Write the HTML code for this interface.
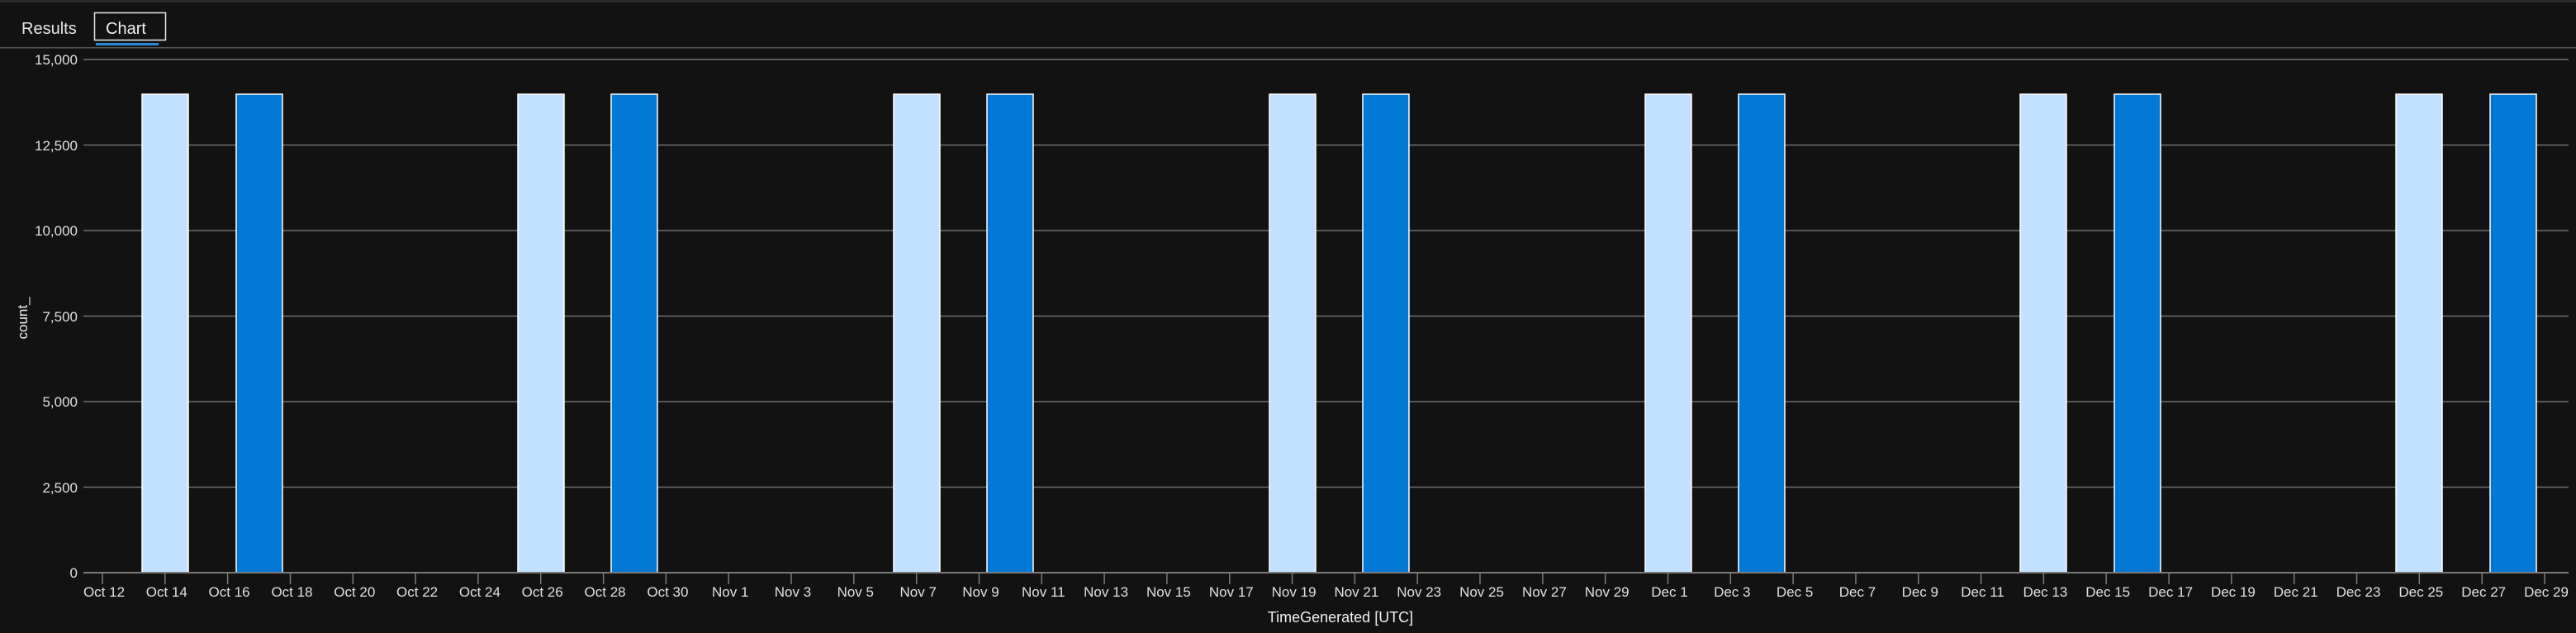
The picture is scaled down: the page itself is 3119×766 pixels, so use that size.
<!DOCTYPE html>
<html><head><meta charset="utf-8"><style>
html,body{margin:0;padding:0;background:#121212;width:3119px;height:766px;overflow:hidden;font-family:"Liberation Sans",sans-serif;}
</style></head><body>
<svg width="3119" height="766" xmlns="http://www.w3.org/2000/svg" style="position:absolute;left:0;top:0">
<rect x="0" y="0" width="3119" height="766" fill="#121212"/>
<rect x="0" y="0" width="3119" height="3" fill="#2a2a2a"/>
<text x="26" y="41" fill="#e6e6e6" font-size="20">Results</text>
<rect x="114.5" y="15.5" width="86" height="33" fill="none" stroke="#e6e6e6" stroke-width="1.5"/>
<text x="128" y="41" fill="#f0f0f0" font-size="20">Chart</text>
<rect x="116" y="52" width="76" height="3" fill="#2b88d8"/>
<rect x="0" y="57" width="3119" height="1.5" fill="#555"/>
<g stroke="#6e6e6e" stroke-width="1.5">
<line x1="101" y1="72" x2="3110" y2="72"/>
<line x1="101" y1="175.5" x2="3110" y2="175.5"/>
<line x1="101" y1="279" x2="3110" y2="279"/>
<line x1="101" y1="382.5" x2="3110" y2="382.5"/>
<line x1="101" y1="486" x2="3110" y2="486"/>
<line x1="101" y1="589.5" x2="3110" y2="589.5"/>
</g>
<g fill="#e0e0e0" font-size="17" text-anchor="end">
<text x="94" y="78">15,000</text>
<text x="94" y="182">12,500</text>
<text x="94" y="285">10,000</text>
<text x="94" y="389">7,500</text>
<text x="94" y="492">5,000</text>
<text x="94" y="596">2,500</text>
<text x="94" y="699">0</text>
</g>
<text transform="translate(33,385) rotate(-90)" fill="#f0f0f0" font-size="17" text-anchor="middle">count_</text>
<g stroke="#ffffff" stroke-width="1.5">
<rect x="172" y="114" width="56" height="579" fill="#c2e0ff"/>
<rect x="286" y="114" width="56" height="579" fill="#0078d4"/>
<rect x="627" y="114" width="56" height="579" fill="#c2e0ff"/>
<rect x="740" y="114" width="56" height="579" fill="#0078d4"/>
<rect x="1082" y="114" width="56" height="579" fill="#c2e0ff"/>
<rect x="1195" y="114" width="56" height="579" fill="#0078d4"/>
<rect x="1537" y="114" width="56" height="579" fill="#c2e0ff"/>
<rect x="1650" y="114" width="56" height="579" fill="#0078d4"/>
<rect x="1992" y="114" width="56" height="579" fill="#c2e0ff"/>
<rect x="2105" y="114" width="56" height="579" fill="#0078d4"/>
<rect x="2446" y="114" width="56" height="579" fill="#c2e0ff"/>
<rect x="2560" y="114" width="56" height="579" fill="#0078d4"/>
<rect x="2901" y="114" width="56" height="579" fill="#c2e0ff"/>
<rect x="3015" y="114" width="56" height="579" fill="#0078d4"/>
</g>
<line x1="101" y1="693" x2="3110" y2="693" stroke="#7a7a7a" stroke-width="2"/>
<g stroke="#7a7a7a" stroke-width="1.5">
<line x1="124" y1="693" x2="124" y2="707"/><line x1="199.8" y1="693" x2="199.8" y2="707"/><line x1="275.6" y1="693" x2="275.6" y2="707"/><line x1="351.5" y1="693" x2="351.5" y2="707"/><line x1="427.3" y1="693" x2="427.3" y2="707"/><line x1="503.1" y1="693" x2="503.1" y2="707"/><line x1="578.9" y1="693" x2="578.9" y2="707"/><line x1="654.7" y1="693" x2="654.7" y2="707"/><line x1="730.6" y1="693" x2="730.6" y2="707"/><line x1="806.4" y1="693" x2="806.4" y2="707"/><line x1="882.2" y1="693" x2="882.2" y2="707"/><line x1="958" y1="693" x2="958" y2="707"/><line x1="1033.8" y1="693" x2="1033.8" y2="707"/><line x1="1109.7" y1="693" x2="1109.7" y2="707"/><line x1="1185.5" y1="693" x2="1185.5" y2="707"/><line x1="1261.3" y1="693" x2="1261.3" y2="707"/><line x1="1337.1" y1="693" x2="1337.1" y2="707"/><line x1="1412.9" y1="693" x2="1412.9" y2="707"/><line x1="1488.8" y1="693" x2="1488.8" y2="707"/><line x1="1564.6" y1="693" x2="1564.6" y2="707"/><line x1="1640.4" y1="693" x2="1640.4" y2="707"/><line x1="1716.2" y1="693" x2="1716.2" y2="707"/><line x1="1792" y1="693" x2="1792" y2="707"/><line x1="1867.9" y1="693" x2="1867.9" y2="707"/><line x1="1943.7" y1="693" x2="1943.7" y2="707"/><line x1="2019.5" y1="693" x2="2019.5" y2="707"/><line x1="2095.3" y1="693" x2="2095.3" y2="707"/><line x1="2171.1" y1="693" x2="2171.1" y2="707"/><line x1="2247" y1="693" x2="2247" y2="707"/><line x1="2322.8" y1="693" x2="2322.8" y2="707"/><line x1="2398.6" y1="693" x2="2398.6" y2="707"/><line x1="2474.4" y1="693" x2="2474.4" y2="707"/><line x1="2550.2" y1="693" x2="2550.2" y2="707"/><line x1="2626.1" y1="693" x2="2626.1" y2="707"/><line x1="2701.9" y1="693" x2="2701.9" y2="707"/><line x1="2777.7" y1="693" x2="2777.7" y2="707"/><line x1="2853.5" y1="693" x2="2853.5" y2="707"/><line x1="2929.3" y1="693" x2="2929.3" y2="707"/><line x1="3005.2" y1="693" x2="3005.2" y2="707"/><line x1="3081" y1="693" x2="3081" y2="707"/>
</g>
<g fill="#e0e0e0" font-size="17" text-anchor="middle">
<text x="126" y="722">Oct 12</text><text x="201.8" y="722">Oct 14</text><text x="277.6" y="722">Oct 16</text><text x="353.5" y="722">Oct 18</text><text x="429.3" y="722">Oct 20</text><text x="505.1" y="722">Oct 22</text><text x="580.9" y="722">Oct 24</text><text x="656.7" y="722">Oct 26</text><text x="732.6" y="722">Oct 28</text><text x="808.4" y="722">Oct 30</text><text x="884.2" y="722">Nov 1</text><text x="960" y="722">Nov 3</text><text x="1035.8" y="722">Nov 5</text><text x="1111.7" y="722">Nov 7</text><text x="1187.5" y="722">Nov 9</text><text x="1263.3" y="722">Nov 11</text><text x="1339.1" y="722">Nov 13</text><text x="1414.9" y="722">Nov 15</text><text x="1490.8" y="722">Nov 17</text><text x="1566.6" y="722">Nov 19</text><text x="1642.4" y="722">Nov 21</text><text x="1718.2" y="722">Nov 23</text><text x="1794" y="722">Nov 25</text><text x="1869.9" y="722">Nov 27</text><text x="1945.7" y="722">Nov 29</text><text x="2021.5" y="722">Dec 1</text><text x="2097.3" y="722">Dec 3</text><text x="2173.1" y="722">Dec 5</text><text x="2249" y="722">Dec 7</text><text x="2324.8" y="722">Dec 9</text><text x="2400.6" y="722">Dec 11</text><text x="2476.4" y="722">Dec 13</text><text x="2552.2" y="722">Dec 15</text><text x="2628.1" y="722">Dec 17</text><text x="2703.9" y="722">Dec 19</text><text x="2779.7" y="722">Dec 21</text><text x="2855.5" y="722">Dec 23</text><text x="2931.3" y="722">Dec 25</text><text x="3007.2" y="722">Dec 27</text><text x="3083" y="722">Dec 29</text>
</g>
<text x="1623" y="753" fill="#f0f0f0" font-size="18" text-anchor="middle">TimeGenerated [UTC]</text>
</svg>
</body></html>
